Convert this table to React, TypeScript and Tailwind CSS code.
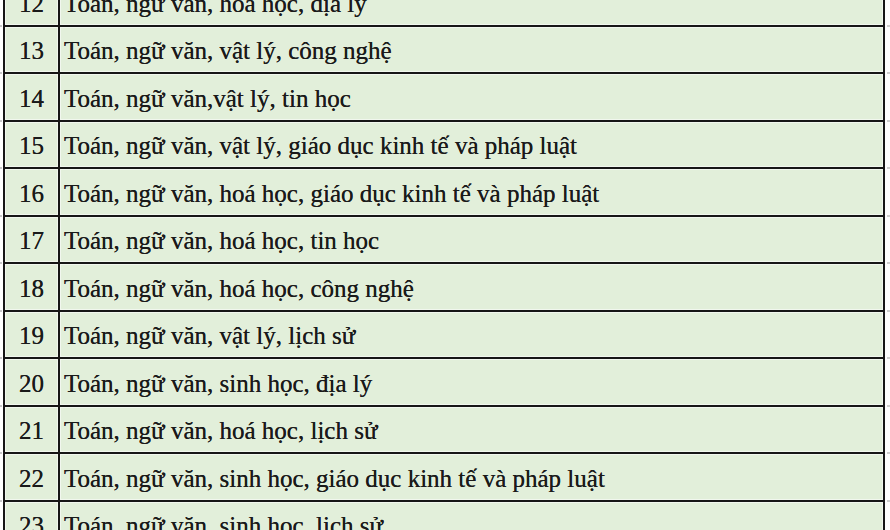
import React from "react";

const rows: [string, string][] = [
  ["12", "Toán, ngữ văn, hoá học, địa lý"],
  ["13", "Toán, ngữ văn, vật lý, công nghệ"],
  ["14", "Toán, ngữ văn,vật lý, tin học"],
  ["15", "Toán, ngữ văn, vật lý, giáo dục kinh tế và pháp luật"],
  ["16", "Toán, ngữ văn, hoá học, giáo dục kinh tế và pháp luật"],
  ["17", "Toán, ngữ văn, hoá học, tin học"],
  ["18", "Toán, ngữ văn, hoá học, công nghệ"],
  ["19", "Toán, ngữ văn, vật lý, lịch sử"],
  ["20", "Toán, ngữ văn, sinh học, địa lý"],
  ["21", "Toán, ngữ văn, hoá học, lịch sử"],
  ["22", "Toán, ngữ văn, sinh học, giáo dục kinh tế và pháp luật"],
  ["23", "Toán, ngữ văn, sinh học, lịch sử"],
];

export default function App() {
  return (
    <div className="w-[890px] h-[530px] overflow-hidden bg-white">
      <div className="flex">
        <div className="w-[3px] flex flex-col -mt-[21px]">
          {rows.map(([n]) => (
            <div key={n} className="h-[47.5px] flex flex-col justify-end">
              <div className="h-[2px] w-[2px] bg-[#c8c8c8]" />
            </div>
          ))}
        </div>
        <div
          className="w-[882px] -mt-[21px] border-x-2 border-[#161616] flex flex-col text-[#1a1a1a] text-[25px] leading-none [text-shadow:0_0_0.5px_#2a2a2a]"
          style={{ fontFamily: '"Liberation Serif", "Times New Roman", serif' }}
        >
          {rows.map(([n, t]) => (
            <div key={n} className="h-[47.5px] flex border-b-2 border-[#161616] bg-[#e2efda]">
              <div className="w-[53px] shrink-0 border border-[#f1f7ee] flex items-center justify-center pt-[3px]">
                {n}
              </div>
              <div className="w-[2px] shrink-0 bg-[#161616]" />
              <div className="flex-1 border border-[#f1f7ee] flex items-center pl-[3px] pt-[3px] whitespace-nowrap">
                {t}
              </div>
            </div>
          ))}
        </div>
        <div className="w-[5px] flex flex-col -mt-[21px] pl-[2px]">
          {rows.map(([n]) => (
            <div key={n} className="h-[47.5px] flex flex-col justify-end">
              <div className="h-[2px] w-[3px] bg-[#cfcfcf]" />
            </div>
          ))}
        </div>
      </div>
    </div>
  );
}
